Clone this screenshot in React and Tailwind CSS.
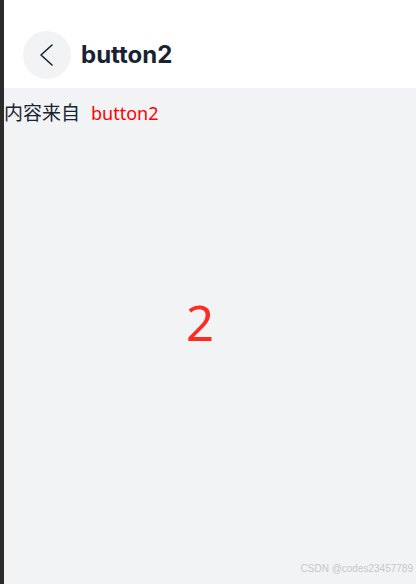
import React from "react";

export default function App() {
  return (
    <div className="flex h-[584px] w-[416px] overflow-hidden bg-[#2b2b2b]" style={{ fontFamily: '"Noto Sans", "Noto Sans CJK SC", sans-serif' }}>
      <div className="w-[4px] shrink-0 bg-[#2b2b2b]" />
      <div className="relative flex flex-1 flex-col bg-[#f1f3f5]">
        <div className="flex h-[88px] shrink-0 items-center bg-white pl-[19px] pt-[22px]">
          <div className="flex h-[48px] w-[48px] items-center justify-center rounded-full bg-[#f1f3f5]">
            <svg width="24" height="24" viewBox="0 0 24 24" fill="none">
              <path d="M17 2 L6 12 L17 22" stroke="#182431" strokeWidth="1.6" strokeLinecap="round" strokeLinejoin="round" />
            </svg>
          </div>
          <span className="ml-[10px] text-[24px] font-bold leading-none text-[#182431]" style={{ fontFamily: 'Inter, "Noto Sans", sans-serif' }}>button2</span>
        </div>
        <div className="mt-[12px] flex items-center text-[19px] leading-[26px]">
          <span className="text-[#182431]">内容来自</span>
          <span className="ml-[11px] text-[18px] text-[#ff0000]">button2</span>
        </div>
        <div className="mt-[172px] flex justify-center pr-[20px]">
          <span className="text-[49px] leading-none text-[#ff2a20]">2</span>
        </div>
        <div className="absolute bottom-[10px] right-[3px] text-[10px] leading-none text-[#c8c8c8]" style={{ fontFamily: '"Liberation Sans", sans-serif' }}>CSDN @codes23457789</div>
      </div>
    </div>
  );
}
